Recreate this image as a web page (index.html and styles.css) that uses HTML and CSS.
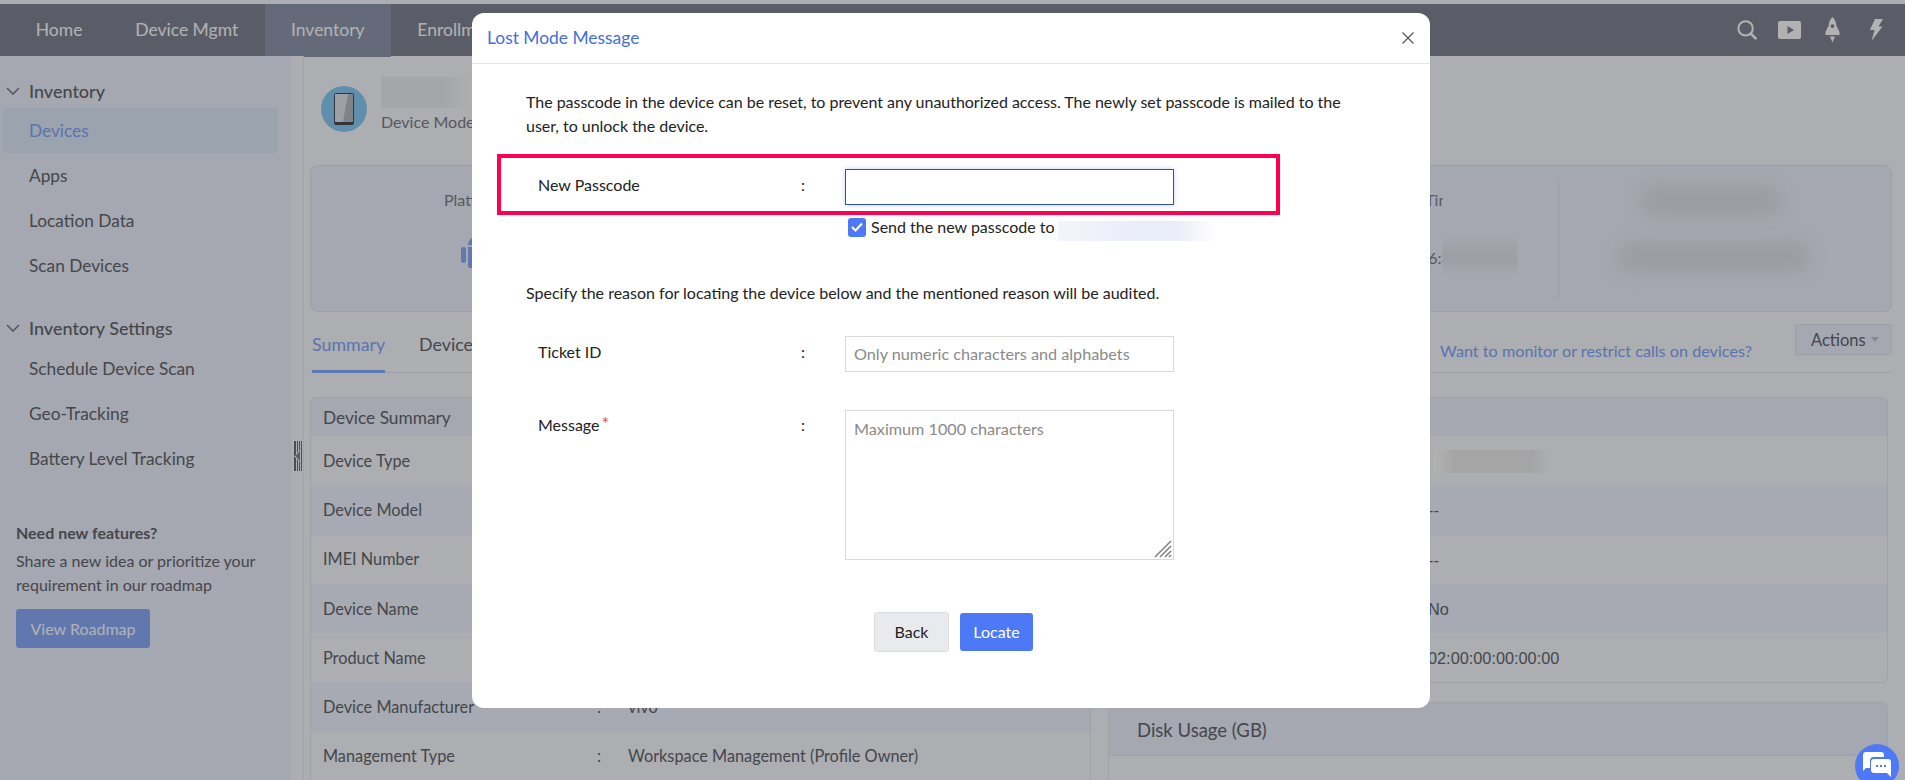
FILE: index.html
```html
<!DOCTYPE html>
<html lang="en">
<head>
<meta charset="utf-8">
<title>Lost Mode Message</title>
<link rel="stylesheet" href="styles.css">
</head>
<body>
<div class="strip"></div>
<header class="nav">
  <a class="nav-item">Home</a>
  <a class="nav-item">Device Mgmt</a>
  <a class="nav-item active">Inventory</a>
  <a class="nav-item">Enrollm</a>
  <div class="nav-icons">
    <span class="nav-icon"><svg width="20" height="20" viewBox="0 0 20 20" fill="none" stroke="#fff" stroke-width="2"><circle cx="8.6" cy="8.4" r="7.2"/><path d="M13.8 13.6l4.8 4.8" stroke-width="2.6" stroke-linecap="round"/></svg></span>
    <span class="nav-icon"><svg width="23" height="18" viewBox="0 0 23 18"><path fill="#fff" fill-rule="evenodd" d="M2 0h19a2 2 0 0 1 2 2v14a2 2 0 0 1-2 2H2a2 2 0 0 1-2-2V2a2 2 0 0 1 2-2zm7.500 5v8l6.500-4z"/></svg></span>
    <span class="nav-icon"><svg width="15" height="26" viewBox="0 0 15 26"><path fill="#fff" fill-rule="evenodd" d="M7.500 0c2.300 2.200 3.600 5 3.800 8.500l3.200 6.500v3H1v-.1L.5 18v-3l3.200-6.500C3.900 5 5.200 2.200 7.500 0zm0 7.200a1.900 1.900 0 1 0 0 3.800 1.900 1.900 0 0 0 0-3.800z"/><path fill="#fff" d="M5 19.500h5L7.500 25.500z"/></svg></span>
    <span class="nav-icon"><svg width="14" height="22" viewBox="0 0 14 22"><path fill="#fff" d="M6 0h8L9.500 7.500H13.500L2.500 22l3-11H.8z"/></svg></span>
  </div>
</header>

<div class="page">
  <aside class="sidebar">
    <div class="side-head"><svg class="chev" width="14" height="8" viewBox="0 0 14 8" fill="none" stroke="#7d808c" stroke-width="1.600"><path d="M1 1l6 6 6-6"/></svg>Inventory</div>
    <a class="side-link current">Devices</a>
    <a class="side-link">Apps</a>
    <a class="side-link">Location Data</a>
    <a class="side-link">Scan Devices</a>
    <div class="side-head second"><svg class="chev" width="14" height="8" viewBox="0 0 14 8" fill="none" stroke="#7d808c" stroke-width="1.600"><path d="M1 1l6 6 6-6"/></svg>Inventory Settings</div>
    <a class="side-link tight">Schedule Device Scan</a>
    <a class="side-link">Geo-Tracking</a>
    <a class="side-link">Battery Level Tracking</a>
    <div class="promo">
      <strong class="promo-title">Need new features?</strong>
      <p class="promo-text">Share a new idea or prioritize your requirement in our roadmap</p>
      <a class="promo-btn">View Roadmap</a>
    </div>
  </aside>

  <div class="resizer">
    <svg width="8" height="30" viewBox="0 0 8 30"><path fill="#6d7079" d="M0 0h2v14L0 15.500 2 17v13H0zM3 0h1v11L3 12zM5 0h1v9L5 10zM7 0h1v30H7V0zM3 18l1 1v11H3zM5 20l1 1v9H5z"/><path fill="#84878f" d="M6 10v10L1.500 15z"/></svg>
  </div>

  <main class="main">
    <section class="device-head">
      <div class="device-pic">
        <svg width="20" height="32" viewBox="0 0 20 32"><rect x=".5" y=".5" width="19" height="31" rx="1" fill="#e4e6ea" stroke="#4a4c52"/><path d="M14 1h5v28H9z" fill="#b9bcc3"/><path d="M1 29h18v2.500H1z" fill="#4a4c52"/></svg>
      </div>
      <div class="device-name">
        <div class="name-blur"></div>
        <div class="device-model">Device Model</div>
      </div>
    </section>

    <section class="stat-card">
      <div class="stat-first">
        <div class="stat-label">Platform</div>
        <svg class="android" width="30" height="38" viewBox="0 0 30 38"><rect x="0" y="11" width="5" height="16" rx="2.500" fill="#8cacfb"/><path d="M7 9a8 8 0 0 1 16 0zM7 11h16v19a2 2 0 0 1-2 2H9a2 2 0 0 1-2-2z" fill="#8cacfb"/></svg>
      </div>
      <div class="stat-mid">
        <div class="stat-label">Last Contact Time</div>
        <div class="stat-value">06:30</div>
      </div>
      <div class="stat-last">
        <div class="soft-line short"></div>
        <div class="soft-line long"></div>
      </div>
      <div class="time-blur"></div>
    </section>

    <nav class="tabs">
      <a class="tab selected">Summary</a>
      <a class="tab">Device</a>
      <a class="tab-link">Want to monitor or restrict calls on devices?</a>
      <button class="actions" type="button">Actions<span class="caret"></span></button>
    </nav>

    <div class="columns">
      <section class="card">
        <h3 class="card-head">Device Summary</h3>
        <div class="row"><span>Device Type</span></div>
        <div class="row alt"><span>Device Model</span></div>
        <div class="row"><span>IMEI Number</span></div>
        <div class="row alt"><span>Device Name</span></div>
        <div class="row"><span>Product Name</span></div>
        <div class="row alt"><span>Device Manufacturer</span><span>:</span><span>vivo</span></div>
        <div class="row"><span>Management Type</span><span>:</span><span>Workspace Management (Profile Owner)</span></div>
      </section>
      <div class="col-right">
        <section class="card">
          <div class="card-head"></div>
          <div class="vrow"><span class="value-blur"></span></div>
          <div class="vrow alt arial">--</div>
          <div class="vrow arial">--</div>
          <div class="vrow alt arial">No</div>
          <div class="vrow arial">02:00:00:00:00:00</div>
        </section>
        <section class="disk">
          <h3 class="disk-head">Disk Usage (GB)</h3>
        </section>
      </div>
    </div>
  </main>
</div>

<div class="overlay">
  <div class="modal">
    <div class="modal-head">
      <span class="modal-title">Lost Mode Message</span>
      <svg class="close" width="12" height="12" viewBox="0 0 12 12" stroke="#555" stroke-width="1.200"><path d="M.5.5l11 11M11.500.5l-11 11"/></svg>
    </div>
    <div class="modal-body">
      <p class="intro">The passcode in the device can be reset, to prevent any unauthorized access. The newly set passcode is mailed to the user, to unlock the device.</p>
      <div class="field first">
        <label class="f-label">New Passcode</label><span class="f-colon">:</span>
        <input class="f-input focus" type="text">
      </div>
      <div class="send">
        <span class="check"><svg width="12" height="10" viewBox="0 0 12 10" fill="none" stroke="#fff" stroke-width="2"><path d="M1 5l3.500 3.500L11 1.500"/></svg></span>
        <span>Send the new passcode to</span>
        <span class="mail-blur"></span>
      </div>
      <p class="reason">Specify the reason for locating the device below and the mentioned reason will be audited.</p>
      <div class="field ticket">
        <label class="f-label">Ticket ID</label><span class="f-colon">:</span>
        <input class="f-input" type="text" placeholder="Only numeric characters and alphabets">
      </div>
      <div class="field message">
        <label class="f-label">Message<span class="req">*</span></label><span class="f-colon">:</span>
        <div class="area-wrap">
          <textarea class="f-area" placeholder="Maximum 1000 characters"></textarea>
          <svg class="grip" width="18" height="18" viewBox="0 0 18 18" stroke="#7f7f7f" stroke-width="1.500"><path d="M1 17L17 1M6 17L17 6M11 17l6-6M15 17l2-2"/></svg>
        </div>
      </div>
      <div class="buttons">
        <button class="btn back" type="button">Back</button>
        <button class="btn locate" type="button">Locate</button>
      </div>
    </div>
    <div class="annotation"></div>
  </div>
</div>

<div class="chat">
  <svg width="28" height="26" viewBox="0 0 28 26"><path fill="#fff" d="M3 1h15a3 3 0 0 1 3 3v2H11a4 4 0 0 0-4 4v7H3l-3 3V4a3 3 0 0 1 3-3z"/><path fill="#fff" d="M11 8h14a3 3 0 0 1 3 3v15l-4-4H11a3 3 0 0 1-3-3v-8a3 3 0 0 1 3-3z"/><path stroke="#4d79f6" stroke-width="2" stroke-dasharray="2 2" d="M13 15h10"/></svg>
</div>
</body>
</html>
```

FILE: styles.css
```css
* { box-sizing: border-box; }
html, body { margin: 0; height: 780px; overflow: hidden; }
body {
  background: #f7f9fe;
  color: #63666e;
  font: 16px/24px "Lato", "Liberation Sans", sans-serif;
}
a { color: inherit; text-decoration: none; }
p, h3 { margin: 0; font-weight: 400; }

.strip { height: 4px; }
.nav {
  display: flex;
  height: 52px;
  padding-left: 9.400px;
  background: #828696;
  color: #fff;
  font-size: 17.5px;
}
.nav-item { padding: 0 26.4px; line-height: 52px; }
.nav-item.active { height: 53px; background: #9099ae; }
.nav-icons { display: flex; margin-left: auto; padding-right: 8px; align-items: center; }
.nav-icon { display: flex; width: 43px; justify-content: center; }

.page { display: flex; height: 724px; }
.sidebar { flex: 0 0 291px; padding-top: 23px; background: #edf1fd; font-size: 17.3px; }
.side-head {
  display: flex;
  align-items: center;
  height: 24px;
  padding-left: 29px;
  position: relative;
  font-size: 18px;
  font-weight: 500;
}
.side-head.second { margin-top: 28px; }
.chev { position: absolute; left: 6px; top: 8px; }
.side-link { display: block; height: 45px; padding-left: 29px; line-height: 45px; }
.side-link.current { margin: 5px 13px 0 3px; padding-left: 26px; border-radius: 3px; background: #dfeaf9; color: #82a6ff; }
.side-link.tight { margin-top: 6px; }
.promo { margin-top: 40px; padding: 0 16px; font-size: 16px; }
.promo-title { display: block; font-weight: 700; }
.promo-text { margin-top: 4px; line-height: 24px; }
.promo-btn {
  display: block;
  width: 134px;
  height: 39px;
  margin-top: 12px;
  border-radius: 3px;
  background: #8cacfb;
  color: #fff;
  line-height: 39px;
  text-align: center;
}

.resizer { flex: 0 0 12px; padding: 385px 0 0 3px; background: #f7f9fe; }
.resizer svg { display: block; }
.main { flex: 1; min-width: 0; padding: 0 13px 0 6px; border-left: 1px solid #ebedf4; }

.device-head { display: flex; padding: 21px 0 0 11px; height: 78px; }
.device-pic {
  display: flex;
  width: 46px;
  height: 46px;
  margin-top: 9px;
  border-radius: 50%;
  background: #88cdf8;
  align-items: center;
  justify-content: center;
}
.device-name { margin-left: 14px; }
.name-blur { width: 92px; height: 31px; background: linear-gradient(90deg, #eceef2 0, #eceef2 70%, #fbfbfd); }
.device-model { margin-top: 2px; color: #7d808a; }

.stat-card {
  position: relative;
  display: grid;
  grid-template-columns: 333px 915px 1fr;
  height: 147px;
  margin-top: 31px;
  border: 1px solid #e1e4ef;
  border-radius: 8px;
  background: #edf1fd;
}
.stat-first { padding: 22px 0 0 133px; }
.stat-label { color: #7d808a; }
.android { display: block; margin: 24px 0 0 17px; }
.stat-mid { padding: 10px 98px 0 0; border-right: 1px solid #e1e4ef; margin: 12px 0; text-align: right; color: #7d808a; }
.stat-value { margin-top: 34px; }
.stat-last { padding: 22px 0 0 60px; }
.soft-line { height: 26px; border-radius: 13px; background: #dadde7; filter: blur(10px); }
.soft-line.short { width: 140px; margin-left: 22px; }
.soft-line.long { width: 190px; margin-top: 30px; }
.time-blur {
  position: absolute;
  left: 1132px;
  top: 24px;
  width: 74px;
  height: 86px;
  background: linear-gradient(180deg, #edf1fd 50%, #e0e3ee 80%, #edf1fd);
}

.tabs {
  display: flex;
  align-items: flex-end;
  height: 49px;
  margin-top: 12px;
  padding-left: 2px;
  border-bottom: 1px solid #e6e8ef;
}
.tab { margin-bottom: -1px; padding-bottom: 14px; border-bottom: 3px solid transparent; font-size: 17.8px; }
.tab + .tab { margin-left: 34px; }
.tab.selected { color: #82a6ff; border-bottom-color: #88aeff; }
.tab-link { margin-left: auto; padding-bottom: 9px; font-size: 16.2px; color: #80a6ff; }
.actions {
  display: flex;
  align-self: flex-start;
  align-items: center;
  width: 97px;
  height: 31px;
  margin-left: 43px;
  padding: 0 0 0 15px;
  border: 1px solid #e1e4ef;
  border-radius: 2px;
  background: #edf1fd;
  color: #63666e;
  font: inherit;
  font-size: 16.5px;
}
.caret { width: 0; height: 0; margin-left: 5px; border: 4px solid transparent; border-top: 5px solid #bfc2cc; border-bottom: 0; }

.columns { display: grid; grid-template-columns: 781px 780px; gap: 17px; margin-top: 24px; }
.card { border: 1px solid #e6e8ef; border-radius: 6px; overflow: hidden; }
.card-head { height: 38px; padding: 8px 12px 0; background: #edf1fd; font-size: 17.3px; line-height: 24px; }
.row {
  display: grid;
  grid-template-columns: 274px 31px 1fr;
  align-items: center;
  height: 49.3px;
  padding-left: 12px;
  font-size: 16.3px;
}
.row > :first-child { grid-column: 1; white-space: nowrap; }
.alt { background: #f0f4ff; }
.vrow { display: flex; align-items: center; height: 49.3px; padding: 1px 0 0 319px; }
.arial { font-family: "Liberation Sans", sans-serif; font-size: 16.3px; }
.value-blur {
  width: 115px;
  height: 23px;
  margin-left: 6px;
  background: linear-gradient(90deg, #fff 0, #ececee 18%, #ececee 85%, #f7f9fe);
}
.disk { height: 100px; margin-top: 19px; border: 1px solid #e6e8ef; border-radius: 6px; }
.disk-head { height: 53px; padding: 15px 28px 0; border-bottom: 1px solid #e6e8ef; background: #edf1fd; font-size: 18.5px; }

.overlay { position: fixed; inset: 0; background: rgba(0, 0, 0, .3); }
.modal {
  position: relative;
  width: 958px;
  height: 695px;
  margin: 13px 0 0 472px;
  border-radius: 12px;
  background: #fff;
  color: #222;
}
.modal-head {
  display: flex;
  align-items: center;
  justify-content: space-between;
  height: 51px;
  padding: 0 16px 0 15px;
  border-bottom: 1px solid #e5e5e5;
}
.modal-title { color: #3f6fe0; font-size: 17.4px; }
.modal-body { padding: 26px 0 0 54px; }
.intro { width: 830px; letter-spacing: -.03px; }
.field { display: grid; grid-template-columns: 263px 44px 329px; padding-left: 12px; }
.field.first { margin-top: 31px; align-items: center; height: 36px; }
.first .f-label, .first .f-colon { padding-bottom: 4px; }
.field.ticket { margin-top: 31px; }
.field.message { margin-top: 38px; }
.ticket .f-label, .ticket .f-colon { padding-top: 4px; }
.message .f-label, .message .f-colon { padding-top: 3px; }
.f-input, .f-area {
  width: 329px;
  border: 1px solid #d9d9d9;
  padding: 0 8px;
  background: #fff;
  font: 16.2px/24px "Lato", sans-serif;
  color: #222;
  outline: 0;
}
.f-input { height: 36px; padding-bottom: 2px; }
.f-input.focus { border-color: #2a50b5; box-shadow: 0 0 5px rgba(70, 110, 235, .3); }
.area-wrap { position: relative; height: 150px; }
.f-area { display: block; height: 150px; padding-top: 6px; resize: none; }
.grip { position: absolute; right: 2px; bottom: 2px; }
.f-input::placeholder, .f-area::placeholder { color: #8a8a8a; opacity: 1; }
.req { margin-left: 2px; color: #f0426b; font-size: 18px; line-height: 0; vertical-align: 1px; }
.send { display: flex; align-items: center; height: 24px; margin: 10px 0 0 322px; }
.check {
  display: flex;
  width: 18px;
  height: 19px;
  margin-right: 5px;
  border-radius: 3px;
  background: #4d79f6;
  align-items: center;
  justify-content: center;
}
.mail-blur {
  width: 158px;
  height: 20px;
  margin: 8px 0 0 3px;
  background: linear-gradient(90deg, #f3f5fc, #e9edf8 50%, #e9edf8 75%, #fff);
}
.reason { margin-top: 42px; }
.buttons { display: flex; gap: 11px; align-items: center; height: 40px; margin: 52px 0 0 348px; }
.btn { height: 38px; border-radius: 3px; padding: 0 0 2px; font: 16px "Lato", sans-serif; }
.back { width: 75px; height: 40px; border: 1px solid #dcdde2; background: #e9eaee; color: #222; }
.locate { width: 73px; border: 0; background: #4d79f6; color: #fff; }
.annotation { position: absolute; left: 25px; top: 141px; width: 783px; height: 61px; border: 4px solid #ff0050; }

.chat {
  position: fixed;
  left: 1855px;
  top: 744px;
  display: flex;
  width: 44px;
  height: 44px;
  padding-bottom: 4px;
  border-radius: 50%;
  background: #4d79f6;
  align-items: center;
  justify-content: center;
}
```
